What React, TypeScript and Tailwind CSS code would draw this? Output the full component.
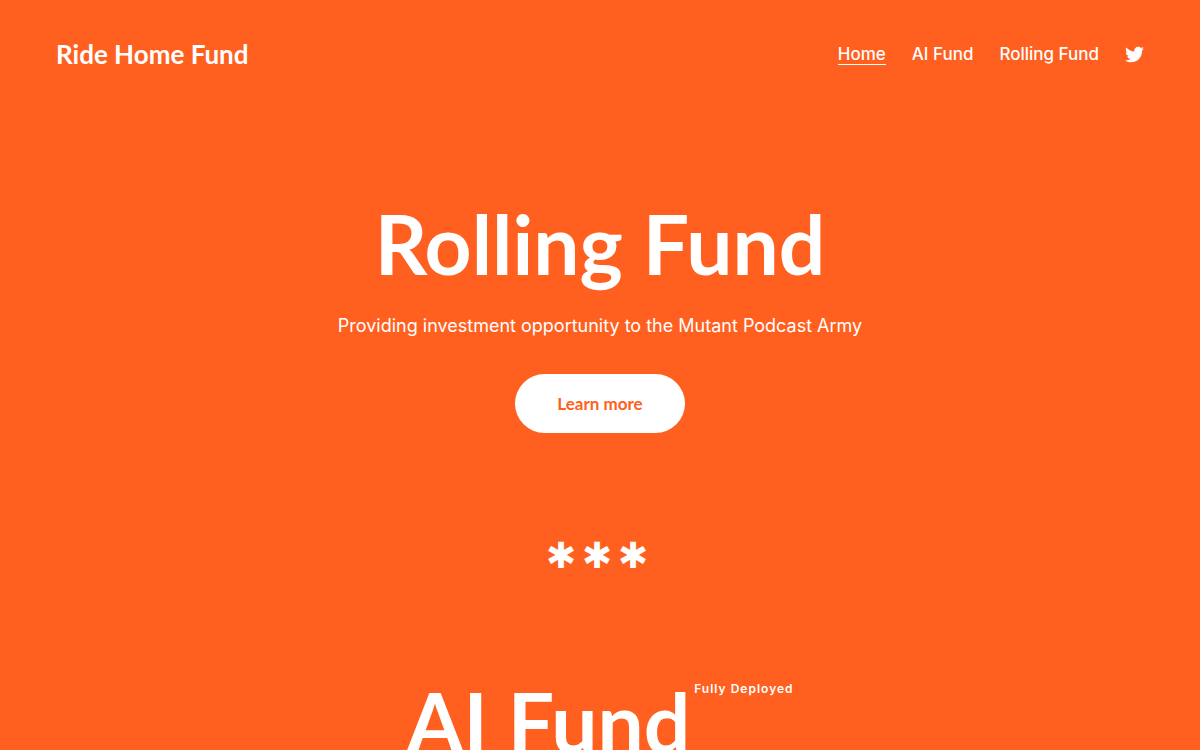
import { FaTwitter } from 'react-icons/fa';

const links = [
  { label: 'Home', active: true },
  { label: 'AI Fund', active: false },
  { label: 'Rolling Fund', active: false },
];

function Header() {
  return (
    <header className="flex items-center justify-between px-14 pt-9">
      <a href="#" className="font-['Lato',sans-serif] text-[26px] leading-9 font-bold">
        Ride Home Fund
      </a>
      <nav className="flex items-center gap-[26px] text-[17px] leading-5 font-medium">
        {links.map((link) => (
          <a
            key={link.label}
            href="#"
            className={link.active ? 'border-b border-white' : 'border-b border-transparent'}
          >
            {link.label}
          </a>
        ))}
        <a href="#" aria-label="Twitter">
          <FaTwitter className="size-[19px]" />
        </a>
      </nav>
    </header>
  );
}

export default function App() {
  return (
    <div className="min-h-screen bg-[#ff6020] font-['Inter',sans-serif] text-white">
      <Header />
      <main className="flex flex-col items-center">
        <h1 className="mt-[121px] font-['Lato',sans-serif] text-[82px] leading-[100px] font-bold">
          Rolling Fund
        </h1>
        <p className="mt-[17px] text-[18px] leading-8">
          Providing investment opportunity to the Mutant Podcast Army
        </p>
        <button className="mt-8 rounded-full bg-white px-[42px] py-5 font-['Lato',sans-serif] text-[17px] leading-[19px] font-bold text-[#ff6020]">
          Learn more
        </button>
        <p className="mt-24 flex gap-[6px] pr-[6px] text-[36px] leading-[52px]">
          <span>✱</span>
          <span>✱</span>
          <span>✱</span>
        </p>
        <h2 className="mt-[90px] flex items-start gap-1 font-['Lato',sans-serif] text-[82px] leading-[100px] font-bold">
          AI Fund
          <sup className="top-0 pt-2 font-['Inter',sans-serif] text-[12px] leading-5 font-semibold tracking-[1px]">
            Fully Deployed
          </sup>
        </h2>
      </main>
    </div>
  );
}
